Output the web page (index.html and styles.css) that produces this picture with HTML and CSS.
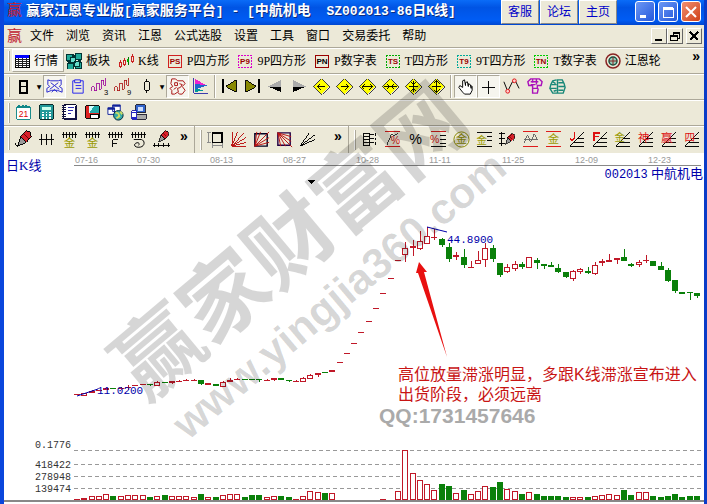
FILE: index.html
```html
<!DOCTYPE html>
<html lang="zh-CN">
<head>
    <meta charset="UTF-8">
    <meta name="viewport" content="width=device-width, initial-scale=1.0">
    <title>赢家江恩专业版</title>
    <link rel="stylesheet" href="styles.css">
</head>
<body>
    <!-- shapes used by more than one tool button -->
    <svg class="defs" aria-hidden="true">
        <symbol id="diamond" viewBox="0 0 20 20">
            <path d="M10 2l8 8-8 8-8-8z" fill="#ff0" stroke="#333"/>
        </symbol>
        <symbol id="comb" viewBox="0 0 20 20">
            <path d="M2 5h16M4 2v6M7 2v6M10 2v6M13 2v6M16 2v6" fill="none" stroke="#000"/>
        </symbol>
        <symbol id="fan" viewBox="0 0 20 20">
            <path d="M3 17L18 2M3 17h15M7 13h11M11 9h7" fill="none" stroke="#000"/>
        </symbol>
        <symbol id="pen" viewBox="0 0 20 20">
            <path d="M7 7l6-6 4 1 1 5-5 6z" fill="#d8202a" stroke="#000"/>
            <path d="M7 7l6 6-9 4z" fill="#999" stroke="#000"/>
            <path d="M10 4l5 5" stroke="#600"/>
        </symbol>
        <symbol id="steps" viewBox="0 0 20 20">
            <path d="M1 17v-5h3v5h3V8h3v7h3V4h3v6h2V1" fill="none" stroke="currentColor"/>
        </symbol>
    </svg>

    <div class="app">
        <header class="titlebar">
            <span class="logo">赢</span>
            <h1>赢家江恩专业版<span>[</span>赢家服务平台<span>] - [</span>中航机电<span>&nbsp; SZ002013-86</span>日<span>K</span>线<span>]</span></h1>
            <nav class="links">
                <a href="#service">客服</a>
                <a href="#forum">论坛</a>
                <a href="#home">主页</a>
            </nav>
            <div class="win-buttons">
                <button aria-label="最小化"><svg viewBox="0 0 18 18"><path d="M4 12h6v3H4z" fill="#fff"/></svg></button>
                <button aria-label="最大化"><svg viewBox="0 0 18 18"><path d="M4 5h10v9H4z" fill="none" stroke="#fff"/><path d="M4 5h10" stroke="#fff" stroke-width="3"/></svg></button>
                <button class="close" aria-label="关闭"><svg class="smooth" viewBox="0 0 18 18"><path d="M4 4l10 10M14 4L4 14" stroke="#fff" stroke-width="2"/></svg></button>
            </div>
        </header>

        <nav class="menu">
            <span class="logo">赢</span>
            <a href="#file">文件</a>
            <a href="#browse">浏览</a>
            <a href="#news">资讯</a>
            <a href="#gann">江恩</a>
            <a href="#formula">公式选股</a>
            <a href="#settings">设置</a>
            <a href="#tools">工具</a>
            <a href="#window">窗口</a>
            <a href="#trade">交易委托</a>
            <a href="#help">帮助</a>
            <div class="mdi">
                <button aria-label="最小化"><svg viewBox="0 0 14 14"><path d="M3 11h7" stroke="#000" stroke-width="2"/></svg></button>
                <button aria-label="还原"><svg viewBox="0 0 14 14"><path d="M5 6V3h6v6H9M2 6h7v5H2zM2 7h7M5 4h6" fill="none" stroke="#000"/></svg></button>
                <button class="mdi-close" aria-label="关闭"><svg viewBox="0 0 14 14"><path d="M3 3l8 8M11 3l-8 8" stroke="#000" stroke-width="2"/></svg></button>
            </div>
        </nav>

        <div class="toolbar text-tools">
            <i class="grip"></i>
            <button class="on"><svg viewBox="0 0 16 16"><path d="M1 2h14v12H1z" fill="#fff" stroke="#000"/><path d="M1 3h14" stroke="#00f" stroke-width="3"/><path d="M1 6h14M1 8h14M1 10h14M1 12h14M4 5v9M8 5v9M12 5v9" stroke="#222"/></svg>行情</button>
            <button><svg viewBox="0 0 16 16"><path d="M0 1h6v6H0zM9 0h6v6H9zM1 10h6v6H1zM9 9h6v6H9z" fill="#2a9" stroke="#033"/><path d="M4 4h5v5H4zM8 8h5v5H8z" fill="#6dc" stroke="#033"/><path d="M7 2l2 2M2 8l2 2M13 7l2 2" stroke="#033" stroke-width="2"/></svg>板块</button>
            <button><svg viewBox="0 0 16 16"><path d="M2 7v8M6 5v8M14 1v9" stroke="#c22"/><path d="M10 4v8" stroke="#070"/><path d="M1 9h2v4H1zM5 7h2v4H5zM13 3h2v5h-2z" fill="#ece9d8" stroke="#c22"/><path d="M9 6h2v3H9z" fill="#0a0"/></svg>K线</button>
            <button><svg viewBox="0 0 16 16"><path d="M1 2h13v12H1z" fill="none" stroke="#d02020"/><text x="8" y="11" fill="#900">PS</text></svg>P四方形</button>
            <button><svg viewBox="0 0 16 16"><path d="M1 2h13v12H1z" fill="none" stroke="#d0c" stroke-dasharray="2 1"/><text x="8" y="11" fill="#900">P9</text></svg>9P四方形</button>
            <button><svg viewBox="0 0 16 16"><path d="M1 2h13v12H1z" fill="none" stroke="#900"/><text x="8" y="11" fill="#000">PN</text></svg>P数字表</button>
            <button><svg viewBox="0 0 16 16"><path d="M1 2h13v12H1z" fill="none" stroke="#0a0" stroke-dasharray="2 1"/><text x="8" y="11" fill="#900">TS</text></svg>T四方形</button>
            <button><svg viewBox="0 0 16 16"><path d="M1 2h13v12H1z" fill="none" stroke="#0a9" stroke-dasharray="2 1"/><text x="8" y="11" fill="#900">T9</text></svg>9T四方形</button>
            <button><svg viewBox="0 0 16 16"><path d="M1 2h13v12H1z" fill="none" stroke="#0c0" stroke-dasharray="2 1"/><text x="8" y="11" fill="#900">TN</text></svg>T数字表</button>
            <button><svg class="smooth" viewBox="0 0 16 16"><circle cx="8" cy="8" r="7" fill="none" stroke="#822" stroke-width="1.5"/><circle cx="8" cy="8" r="4" fill="#9cb" stroke="#154" stroke-width="1.5"/><path d="M8 4v8M4 8h8" stroke="#822"/></svg>江恩轮</button>
            <button class="more" aria-label="更多">»</button>
        </div>

        <div class="toolbar">
            <i class="grip"></i>
            <button aria-label="日线"><svg viewBox="0 0 20 20"><path d="M6 4h8v13H6zM6 10h8" fill="none" stroke="#000" stroke-width="2"/></svg></button>
            <button class="drop" aria-label="选择周期">▼</button>
            <button class="on" aria-label="叠加"><svg class="smooth" viewBox="0 0 20 20"><path d="M3 3l3 1h8l3-1v5l-2 2 3 2v4l-5-2H7l-5 2v-4l3-2-2-2zM6 6l4 3 4-3M5 13l5-4 5 4M7 16l3-3 3 3" fill="none" stroke="#22c"/></svg></button>
            <button aria-label="记录"><svg class="smooth" viewBox="0 0 20 20"><path d="M7 4H5v13h11V4h-3M7 3h6v3H7zM8 9h6M8 12h6" fill="none" stroke="#22e"/></svg></button>
            <button aria-label="三日线"><svg viewBox="0 0 20 20" color="#909"><use href="#steps" width="17" height="17"/><text x="16" y="19" fill="#000">3</text></svg></button>
            <button aria-label="九日线"><svg viewBox="0 0 20 20" color="#a11"><use href="#steps" width="17" height="17"/><text x="16" y="19" fill="#000">9</text></svg></button>
            <button aria-label="蜡烛图"><svg viewBox="0 0 20 20"><path d="M10 2v15" stroke="#000"/><path d="M8 5h5v9H8z" fill="#ece9d8" stroke="#000"/></svg></button>
            <button class="drop" aria-label="选择图形">▼</button>
            <button class="on" aria-label="形态"><svg class="smooth" viewBox="0 0 20 20"><path d="M4 2h4l2 2h6l2 3-3 3 3 4-3 4h-3l-2-2-3 2H4v-4l-2-2 3-2-2-3zM7 6h3v3H7zM12 7l3 1-2 3-3 1 1 4M6 13l3-2" fill="none" stroke="#a11"/></svg></button>
            <button aria-label="筹码分布"><svg viewBox="0 0 20 20"><path d="M4 2v7h13z" fill="#e2c"/><path d="M4 7l13 2-13 4z" fill="#26c"/><path d="M4 12l10 2-10 2z" fill="#099"/><path d="M3 1v16h15" fill="none" stroke="#33a"/></svg></button>
            <i class="sep"></i>
            <button aria-label="第一页"><svg viewBox="0 0 20 20"><path d="M3 2v15" stroke="#000" stroke-width="2"/><path d="M17 3v13L6 10z" fill="#880" stroke="#000"/></svg></button>
            <button aria-label="最后页"><svg viewBox="0 0 20 20"><path d="M17 2v15" stroke="#000" stroke-width="2"/><path d="M3 3v13l11-6z" fill="#880" stroke="#000"/></svg></button>
            <button aria-label="向左"><svg viewBox="0 0 20 20"><path d="M2 10L16 3v7z" fill="#aaa"/><path d="M2 10h14v6z" fill="#000"/></svg></button>
            <button aria-label="向右"><svg viewBox="0 0 20 20"><path d="M18 10L4 3v7z" fill="#aaa"/><path d="M18 10H4v6z" fill="#000"/></svg></button>
            <button aria-label="左移"><svg viewBox="0 0 20 20"><use href="#diamond"/><path d="M6 10h8M9 7l-3 3 3 3" fill="none" stroke="#000"/></svg></button>
            <button aria-label="右移"><svg viewBox="0 0 20 20"><use href="#diamond"/><path d="M6 10h8M11 7l3 3-3 3" fill="none" stroke="#000"/></svg></button>
            <button aria-label="横向放大"><svg viewBox="0 0 20 20"><use href="#diamond"/><path d="M5 10h10M8 7l-3 3 3 3M12 7l3 3-3 3" fill="none" stroke="#000"/></svg></button>
            <button aria-label="横向缩小"><svg viewBox="0 0 20 20"><use href="#diamond"/><path d="M3 10h14M6 7l3 3-3 3M14 7l-3 3 3 3" fill="none" stroke="#000"/></svg></button>
            <button aria-label="缩小"><svg viewBox="0 0 20 20"><use href="#diamond"/><path d="M5 10h10M10 4v12M7 5l3 3 3-3M7 15l3-3 3 3" fill="none" stroke="#000"/></svg></button>
            <button aria-label="放大"><svg viewBox="0 0 20 20"><use href="#diamond"/><path d="M5 10h10M10 4v12M7 7l3-3 3 3M7 13l3 3 3-3" fill="none" stroke="#000"/></svg></button>
            <i class="sep"></i>
            <button class="on" aria-label="拖动"><svg class="smooth" viewBox="0 0 20 20"><path d="M7 16l-4-5 1-2 3 2V4l2-1 1 6V6l2-1 1 5V7l2 1 1 4V9l1 1v4l-2 4H9z" fill="#fff" stroke="#000"/></svg></button>
            <button class="on" aria-label="十字光标"><svg viewBox="0 0 20 20"><path d="M10 4v14M3 11h14" stroke="#000"/></svg></button>
            <button aria-label="折线"><svg class="smooth" viewBox="0 0 20 20"><path d="M2 5l4 10 5-10 3-1 4 8" fill="none" stroke="#000"/><circle cx="6" cy="15" r="2" fill="#fcc" stroke="#d11"/><circle cx="13" cy="4" r="2" fill="#fcc" stroke="#d11"/></svg></button>
            <button aria-label="江恩工具"><svg class="smooth" viewBox="0 0 20 20"><path d="M3 5l3-3h9l3 3-1 4h-4v3H8V9H4zM6 5h8M8 2v4M12 2v6M8 12v5h5l1-5M6 8h5" fill="none" stroke="#a1b" stroke-width="1.5"/></svg></button>
            <button aria-label="智能分析"><svg class="smooth" viewBox="0 0 20 20"><path d="M9 3L5 4 3 8l-1 4 3 5h5V3h5l2 4 1 4-2 6h-6M4 8h5M3 12h6M5 5l3 2M11 6h5M11 10h6M11 14h5M6 15l3-1" fill="none" stroke="#198878" stroke-width="1.5"/></svg></button>
        </div>

        <div class="toolbar">
            <i class="grip"></i>
            <button aria-label="日历"><svg viewBox="0 0 20 20"><path d="M3 4h14v13H3z" fill="#fff" stroke="#188"/><path d="M3 4h14M5 2v3M9 2v3M13 2v3" stroke="#188" stroke-width="2"/><text x="10" y="15" class="t9" fill="#d00">21</text></svg></button>
            <button aria-label="计算器"><svg viewBox="0 0 20 20"><path d="M3 2h14v15H3z" fill="#299" stroke="#022"/><path d="M5 4h10v3H5z" fill="#cfe"/><path d="M5 10h10M5 13h10M5 16h10" stroke="#fff" stroke-dasharray="2 2" stroke-width="2"/></svg></button>
            <button aria-label="笔记"><svg viewBox="0 0 20 20"><path d="M4 2h13v15H4z" fill="#fff" stroke="#002"/><path d="M4 2v15" stroke="#114" stroke-width="4" stroke-dasharray="1 1"/><path d="M8 5h7M8 8h6M8 11h4" stroke="#22a"/><path d="M17 3v14H6" fill="none" stroke="#114" stroke-width="2"/></svg></button>
            <button aria-label="保存"><svg viewBox="0 0 20 20"><path d="M3 3h14v13H3z" fill="#d22" stroke="#000"/><path d="M6 3h11v7H6z" fill="#2aa"/><path d="M6 3h6L7 10H6z" fill="#cff"/><path d="M8 12h8v4H8z" fill="#fff" stroke="#000"/></svg></button>
            <button aria-label="网络"><svg class="smooth" viewBox="0 0 20 20"><path d="M7 2h8v7H7zM2 5h7v7H2z" fill="#fff" stroke="#129"/><path d="M7 3h8M2 6h7" stroke="#129" stroke-width="2"/><circle cx="13" cy="13" r="5" fill="#3aa" stroke="#023"/><path d="M10 10l3 1 1 3-3 2M15 9l2 3" fill="none" stroke="#cd6" stroke-width="2"/></svg></button>
            <button aria-label="系统"><svg viewBox="0 0 20 20"><path d="M7 2h10v8H7z" fill="#36c" stroke="#223"/><path d="M9 4h6v4H9z" fill="#cdf"/><path d="M8 12h10v5H8z" fill="#aaa" stroke="#223"/><path d="M3 8h5v9H3z" fill="#fff" stroke="#22a"/><path d="M3 10h5M3 16h5" stroke="#22c" stroke-width="2"/></svg></button>
        </div>

        <div class="draw-bars">
            <div class="toolbar">
                <i class="grip"></i>
                <button aria-label="画笔"><svg viewBox="0 0 20 20"><use href="#pen"/><path d="M1 14l3 4" stroke="#000"/></svg></button>
                <button aria-label="等分线"><svg viewBox="0 0 20 20"><path d="M2 10h16M5 4v12M10 4v12M15 4v12" stroke="#000"/></svg></button>
                <button aria-label="黄金周期"><svg viewBox="0 0 20 20"><use href="#comb"/><text x="10" y="18" class="t12" fill="#990">金</text></svg></button>
                <button aria-label="黄金时间"><svg viewBox="0 0 20 20"><use href="#comb"/><text x="10" y="18" class="t12" fill="#990">金</text></svg></button>
                <button aria-label="斐波那契"><svg viewBox="0 0 20 20"><use href="#comb"/><path d="M7 18V10h6M7 14h5" fill="none" stroke="#000"/></svg></button>
                <button aria-label="螺旋"><svg viewBox="0 0 20 20"><use href="#comb"/><path class="smooth" d="M5 10h8c4 1 4 7-1 8-5 1-8-2-5-4 3-2 5 1 3 2" fill="none" stroke="#000"/></svg></button>
                <button aria-label="标尺画笔"><svg viewBox="0 0 20 20"><use href="#pen" width="17" height="15" x="3"/><path d="M1 16h18M3 14v4M7 14v4M12 14v4M17 14v4" stroke="#000"/></svg></button>
                <button class="more" aria-label="更多">»</button>
            </div>
            <div class="toolbar">
                <i class="grip"></i>
                <button aria-label="矩形"><svg viewBox="0 0 20 20"><path d="M7 3h10v10H7z" fill="none" stroke="#000" stroke-width="1.5"/><path d="M3 3v11M1 3h4M1 13h4M7 16h10M7 14v5M17 14v5" stroke="#888"/></svg></button>
                <button aria-label="射线"><svg viewBox="0 0 20 20"><path d="M3 17L4 2M3 17L9 2M3 17L16 3M3 17l15-9M3 17l15-4M3 17h15" stroke="#b11"/></svg></button>
                <button aria-label="江恩角度"><svg class="smooth" viewBox="0 0 20 20"><path d="M3 4h13v13H3z" fill="none" stroke="#002" stroke-width="1.5"/><path d="M3 17L5 2M3 17l6-15M3 17L18 2M3 17l15-9M3 17l15-4" stroke="#b11"/></svg></button>
                <button aria-label="反向角度"><svg class="smooth" viewBox="0 0 20 20"><path d="M3 3h13v13H3z" fill="none" stroke="#204" stroke-width="1.5"/><path d="M3 3l3 14M3 3l8 14M3 3l15 15M3 3l14 9M3 3l14 4" stroke="#b11"/></svg></button>
                <button aria-label="扇形线"><svg viewBox="0 0 20 20"><path d="M2 17L12 3M2 17L18 5M2 17l16-7M2 17l4-3" stroke="#000"/></svg></button>
                <button class="more" aria-label="更多">»</button>
            </div>
            <div class="toolbar">
                <i class="grip"></i>
                <button aria-label="价格尺"><svg viewBox="0 0 20 20"><path d="M4 3v14M10 3v14" stroke="#000"/><path d="M4 4h6M4 7h6M4 10h6M4 13h6M4 16h6M10 5h5M10 9h5M10 13h5" stroke="#000"/><path d="M16 3v14" stroke="#000" stroke-dasharray="3 2"/></svg></button>
                <button aria-label="涨跌幅"><svg viewBox="0 0 20 20"><path d="M2 2h16M2 17h16" stroke="#c11"/><path d="M4 16L9 4l3 2 4-3" fill="none" stroke="#333"/><text x="13" y="15" class="t11" fill="#c11">%</text></svg></button>
                <button aria-label="百分比"><svg viewBox="0 0 20 20"><text x="10" y="15" class="t15" fill="#000">%</text></svg></button>
                <button aria-label="百分比线"><svg viewBox="0 0 20 20"><path d="M2 2h16" stroke="#c11"/><path d="M12 6h6M12 10h6M12 14h6M2 17h16" stroke="#000"/><text x="6" y="14" class="t11" fill="#c11">%</text></svg></button>
                <button aria-label="黄金圆"><svg class="smooth" viewBox="0 0 20 20"><circle cx="10" cy="10" r="8" fill="none" stroke="#880"/><text x="10" y="14" class="t12" fill="#880">金</text></svg></button>
                <button aria-label="黄金分割"><svg viewBox="0 0 20 20"><path d="M2 3h16M13 7h5M13 11h5M2 17h16" stroke="#000"/><text x="7" y="15" class="t11" fill="#990">金</text></svg></button>
                <button aria-label="标注"><svg viewBox="0 0 20 20"><path d="M4 2v15M1 4h6M1 9h6M1 14h6" stroke="#000"/><use href="#pen" x="5" y="2" width="14" height="16"/></svg></button>
                <button aria-label="波浪"><svg viewBox="0 0 20 20"><path d="M2 2h16M2 17h16" stroke="#d11"/><path d="M3 14l4-9 3 8 4-9 3 6M3 10h14" fill="none" stroke="#666"/></svg></button>
                <button aria-label="黄金通道"><svg viewBox="0 0 20 20"><path d="M2 2h16M2 17h16" stroke="#d11"/><text x="10" y="14" class="t12" fill="#990">金</text></svg></button>
                <button aria-label="J线"><svg viewBox="0 0 20 20"><use href="#fan"/><path d="M8 2v7l-3 2-2-2" fill="none" stroke="#d11" stroke-width="1.5"/></svg></button>
                <button aria-label="F线"><svg viewBox="0 0 20 20"><use href="#fan"/><path d="M4 12V3h6M4 7h5" fill="none" stroke="#d11" stroke-width="1.5"/></svg></button>
                <button aria-label="金线"><svg viewBox="0 0 20 20"><use href="#fan"/><text x="7" y="12" class="t11" fill="#990">金</text></svg></button>
                <button aria-label="神线"><svg viewBox="0 0 20 20"><use href="#fan"/><text x="8" y="13" class="t12" fill="#d11">神</text></svg></button>
                <button aria-label="赢线"><svg viewBox="0 0 20 20"><use href="#fan"/><text x="8" y="13" class="t12" fill="#d11">赢</text></svg></button>
                <button aria-label="四线"><svg viewBox="0 0 20 20"><use href="#fan"/><text x="8" y="12" class="t11" fill="#d11">四</text></svg></button>
            </div>
        </div>

        <main>
            <svg class="chart" viewBox="4 153 700 351" role="img" aria-label="中航机电 日K线">
                <text x="6" y="170" class="name">日K线</text>
                <text x="703" y="178" class="name end"><tspan class="code">002013</tspan> 中航机电</text>
                <g id="dates" class="date"></g>
                <path d="M74 165H701" stroke="#888"/>
                <path d="M308 180h7l-3 4h-1z" fill="#000"/>

                <g class="scale">
                    <text x="71" y="448">0.1776</text>
                    <text x="71" y="468">418422</text>
                    <text x="71" y="480">278948</text>
                    <text x="71" y="492">139474</text>
                </g>
                <path d="M74 450H701M74 464H701M74 476H701M74 488H701" stroke="#999" stroke-dasharray="4 3"/>

                <g id="candles"></g>
                <g id="volumes"></g>
                <path d="M4 501H704" stroke="#888" stroke-width="2"/>

                <path class="smooth" d="M77 396L98 389M427 227L447 232" stroke="#00a"/>
                <text x="97" y="394" class="price">11.0200</text>
                <text x="447" y="243" class="price">44.8900</text>

                <path class="smooth" d="M419 262l8 10-3 0 23 85-29-84-2 0z" fill="#e81010"/>
                <text class="note"><tspan x="398" y="380">高位放量滞涨明显，多跟K线滞涨宣布进入</tspan><tspan x="398" y="400">出货阶段，必须远离</tspan></text>
                <text x="379" y="423" class="qq">QQ:1731457646</text>
            </svg>
        </main>

        <svg class="watermark" viewBox="0 0 707 504" aria-hidden="true">
            <text class="brand" transform="translate(145 403) rotate(-40)">赢家财富网</text>
            <text class="url" transform="translate(188 441) rotate(-40)">www.yingjia360.com</text>
        </svg>
    </div>

    <script src="script.js"></script>
</body>
</html>
```
FILE: styles.css
```css
* {
    margin: 0;
    padding: 0;
    box-sizing: border-box;
}

body {
    font-family: "Liberation Serif", "Noto Sans CJK SC", sans-serif;
    font-size: 12px;
    line-height: 16px;
    color: #000;
    background: #fff;
}

a {
    color: inherit;
    text-decoration: none;
}

button {
    font: inherit;
    color: inherit;
    background: none;
    border: 0;
}

svg {
    display: block;
    shape-rendering: crispEdges;
}

.smooth {
    shape-rendering: auto;
}

.defs {
    position: absolute;
    width: 0;
    height: 0;
}

.app {
    position: relative;
    min-height: 100vh;
    overflow: hidden;
    border-left: 4px solid #0a46dc;
    border-right: 3px solid #0a3cc8;
}

.logo {
    width: 15px;
    color: #c02030;
    font-size: 15px;
    line-height: 20px;
}

/* title bar */
.titlebar {
    display: flex;
    height: 25px;
    padding: 0 3px;
    background: linear-gradient(#0a6cf8, #0054e4 30%, #005cf4 80%, #0046d0);
}

.titlebar .logo {
    margin-right: 4px;
}

.titlebar h1 {
    font-size: 14px;
    line-height: 22px;
    font-weight: bold;
    color: #fff;
    text-shadow: 1px 1px #0a2c80;
    white-space: nowrap;
}

.titlebar h1 span {
    font-family: "Liberation Mono", monospace;
    font-size: 13px;
}

.links {
    display: flex;
    gap: 1px;
    margin-left: auto;
    margin-right: 18px;
}

.links a {
    width: 38px;
    height: 24px;
    padding-top: 3px;
    text-align: center;
    color: #0000c8;
    background: #ece9d8;
    border: 1px solid #fff;
    border-right-color: #888;
    border-bottom-color: #888;
}

.win-buttons {
    display: flex;
    gap: 3px;
    padding-top: 1px;
}

.win-buttons button {
    width: 20px;
    height: 21px;
    border: 1px solid #fff;
    border-radius: 3px;
    background: linear-gradient(135deg, #6c98f4, #2458dc);
}

.win-buttons .close {
    background: linear-gradient(135deg, #f09070, #d04018);
}

/* menu */
.menu {
    display: flex;
    align-items: center;
    gap: 12px;
    height: 22px;
    padding-left: 3px;
    background: #ece9d8;
    white-space: nowrap;
}

.menu .logo {
    margin-right: -4px;
}

.mdi {
    display: flex;
    margin-left: auto;
    padding-right: 2px;
}

.mdi button {
    width: 16px;
    height: 16px;
    background: #ece9d8;
    border: 1px solid #fff;
    border-right-color: #666;
    border-bottom-color: #666;
}

.mdi .mdi-close {
    margin-left: 3px;
}

/* toolbars */
.toolbar {
    display: flex;
    align-items: center;
    height: 26px;
    padding-left: 4px;
    background: #ece9d8;
    border-top: 1px solid #aca899;
    box-shadow: inset 0 1px #fff;
}

.toolbar button {
    flex: none;
    width: 23px;
    height: 23px;
    padding: 1px;
    border: 1px solid transparent;
}

.toolbar button svg {
    width: 19px;
    height: 19px;
}

.toolbar .on {
    background: #f6f5ee;
    border-color: #aca899 #fff #fff #aca899;
}

.toolbar text {
    font: 8px "Liberation Sans", "Noto Sans CJK SC", sans-serif;
    text-anchor: middle;
}

.toolbar .t9 {
    font-size: 9px;
}

.toolbar .t11 {
    font-size: 11px;
}

.toolbar .t12 {
    font-size: 12px;
}

.toolbar .t15 {
    font-size: 15px;
}

.grip {
    flex: none;
    width: 2px;
    height: 20px;
    margin-right: 2px;
    border-left: 1px solid #fff;
    border-right: 1px solid #aca899;
}

.sep {
    flex: none;
    width: 2px;
    height: 23px;
    margin: 0 2px;
    border-left: 1px solid #aca899;
    border-right: 1px solid #fff;
}

.toolbar .drop {
    width: 8px;
    padding: 0;
    font: 6px "DejaVu Sans", sans-serif;
}

.toolbar .more {
    width: 20px;
    height: 23px;
    font: bold 14px/12px "Liberation Sans", sans-serif;
    padding-bottom: 9px;
}

.text-tools text {
    font-weight: bold;
}

.toolbar.text-tools button {
    display: flex;
    align-items: center;
    gap: 4px;
    width: auto;
    height: 23px;
    padding: 0 5px 0 1px;
    white-space: nowrap;
}

.toolbar.text-tools button svg {
    width: 16px;
    height: 16px;
}

.toolbar.text-tools .on {
    border-color: #fff #aca899 #aca899 #fff;
}

.toolbar.text-tools .more {
    margin-left: auto;
    padding: 0 3px 9px;
}

.draw-bars {
    display: flex;
    background: #ece9d8;
}

.draw-bars .toolbar {
    flex: 0 0 auto;
    width: 191px;
    height: 28px;
    border-right: 1px solid #aca899;
}

.draw-bars .toolbar + .toolbar {
    width: 154px;
    padding-left: 5px;
}

.draw-bars .toolbar:last-child {
    flex: 1;
    width: auto;
    border-right: 0;
}

.draw-bars .more {
    margin-left: auto;
}

/* chart */
.chart {
    width: 100%;
    background: #fff;
}

.chart .name {
    font-size: 13px;
    fill: #00a;
}

.chart .code {
    font-family: "Liberation Mono", monospace;
    font-size: 12px;
}

.chart .end {
    text-anchor: end;
}

.chart .date {
    font-family: "Liberation Sans", sans-serif;
    font-size: 9px;
    fill: #999;
}

.chart .scale {
    font-family: "Liberation Mono", monospace;
    font-size: 10px;
    text-anchor: end;
    fill: #333;
}

.chart .price {
    font-family: "Liberation Mono", monospace;
    font-size: 11px;
    fill: #00a;
}

.chart .note {
    font-family: "Liberation Sans", "Noto Sans CJK SC", sans-serif;
    font-size: 16px;
    fill: #c81414;
}

.chart .qq {
    font-family: "Liberation Sans", sans-serif;
    font-size: 21px;
    font-weight: bold;
    fill: #aaa;
}

.watermark {
    position: absolute;
    top: 0;
    left: -4px;
    width: calc(100% + 7px);
    pointer-events: none;
    fill: rgba(0, 0, 0, 0.16);
    font-weight: bold;
}

.watermark .brand {
    font-family: "Noto Sans CJK SC", sans-serif;
    font-size: 86px;
}

.watermark .url {
    font-family: "Liberation Sans", sans-serif;
    font-size: 43px;
}
```
FILE: script.js
```js
// kind (h = hollow red, r = red, g = green), body top, body bottom, wick top, wick bottom, volume height
const bars = [
    ['r', 394, 395, 394, 395, 1], ['h', 393, 395, 393, 395, 2], ['r', 391, 393, 390, 393, 4], ['r', 390, 391, 390, 391, 4],
    ['r', 388, 390, 387, 390, 6], ['g', 388, 389, 388, 389, 4], ['r', 388, 389, 387, 390, 4], ['r', 387, 388, 385, 390, 5],
    ['r', 385, 386, 385, 386, 5], ['r', 384, 385, 384, 385, 5], ['g', 384, 385, 384, 386, 3], ['h', 382, 385, 381, 386, 4],
    ['g', 382, 383, 382, 383, 5], ['r', 381, 383, 381, 384, 4], ['r', 381, 382, 380, 382, 4], ['r', 380, 381, 379, 381, 4],
    ['r', 380, 381, 379, 381, 3], ['g', 380, 384, 380, 385, 6], ['r', 383, 385, 383, 385, 3], ['g', 384, 386, 384, 386, 3],
    ['h', 382, 386, 381, 386, 5], ['r', 380, 382, 378, 382, 6], ['r', 379, 380, 378, 380, 6], ['g', 379, 380, 379, 380, 3],
    ['g', 379, 380, 379, 380, 5], ['g', 379, 380, 379, 382, 5], ['r', 380, 381, 379, 381, 3], ['r', 378, 380, 378, 381, 4],
    ['g', 378, 380, 378, 380, 4], ['g', 380, 381, 380, 382, 3], ['r', 381, 382, 380, 382, 1], ['h', 378, 381, 377, 382, 4],
    ['h', 375, 378, 374, 379, 9], ['r', 373, 375, 373, 377, 8], ['g', 372, 373, 372, 373, 7], ['r', 370, 372, 370, 372, 7],
    ['r', 362, 363, 362, 363, 0], ['r', 353, 354, 353, 354, 0], ['r', 343, 344, 343, 344, 0], ['r', 332, 333, 332, 333, 0],
    ['r', 321, 322, 321, 322, 0], ['r', 308, 309, 308, 309, 0], ['r', 293, 294, 293, 294, 1], ['r', 278, 279, 278, 279, 0],
    ['r', 260, 261, 260, 261, 9], ['h', 248, 254, 242, 262, 50], ['r', 246, 248, 240, 256, 27], ['h', 241, 248, 231, 250, 20],
    ['h', 236, 243, 227, 244, 16], ['r', 237, 238, 229, 240, 10], ['g', 239, 245, 238, 247, 16], ['g', 247, 259, 243, 262, 14],
    ['r', 255, 257, 252, 260, 7], ['g', 257, 265, 249, 268, 10], ['r', 267, 268, 261, 268, 6], ['h', 260, 263, 251, 263, 9],
    ['h', 248, 259, 243, 267, 14], ['g', 248, 259, 245, 262, 13], ['g', 263, 275, 263, 277, 18], ['h', 267, 271, 264, 273, 11],
    ['h', 264, 268, 261, 271, 9], ['g', 264, 267, 262, 269, 6], ['h', 257, 267, 257, 268, 8], ['g', 260, 263, 258, 269, 6],
    ['g', 264, 266, 264, 269, 4], ['g', 265, 267, 262, 267, 4], ['g', 268, 272, 264, 273, 4], ['g', 272, 277, 272, 278, 3],
    ['h', 271, 278, 270, 281, 3], ['h', 269, 271, 268, 274, 3], ['g', 271, 273, 267, 274, 3], ['h', 265, 273, 262, 275, 4],
    ['r', 261, 263, 259, 266, 5], ['r', 260, 262, 254, 262, 6], ['r', 258, 260, 258, 264, 5], ['g', 257, 261, 249, 261, 10],
    ['g', 264, 266, 263, 267, 5], ['h', 262, 264, 260, 267, 8], ['r', 260, 261, 255, 263, 8], ['g', 261, 266, 261, 266, 4],
    ['g', 266, 270, 262, 270, 3], ['g', 270, 281, 268, 282, 4], ['g', 280, 291, 280, 293, 6], ['g', 292, 294, 292, 294, 3],
    ['g', 292, 293, 292, 300, 4], ['g', 293, 296, 293, 298, 4]
];
const dates = ['07-16', '07-30', '08-13', '08-27', '10-28', '11-11', '11-25', '12-09', '12-23'];
const dateX = [75, 137, 210, 283, 356, 429, 502, 575, 648];

const RED = '#c01828';
const GREEN = '#0a800a';
const BASE = 500;

function rect(x, y, w, h, fill, stroke) {
    if (stroke) {
        // keep the outline inside the box
        return `<rect x="${x + 0.5}" y="${y + 0.5}" width="${w - 1}" height="${h - 1}" fill="${fill}" stroke="${stroke}"/>`;
    }
    return `<rect x="${x}" y="${y}" width="${w}" height="${h}" fill="${fill}"/>`;
}

let candles = '';
let volumes = '';

bars.forEach(([kind, top, bottom, high, low, vol], i) => {
    const x = Math.round(77 + i * 620 / 85) - 3;
    const color = kind === 'g' ? GREEN : RED;

    // one-pixel days have no wick
    if (low - high > 1) {
        candles += rect(x + 3, high, 1, low - high, color);
    }
    candles += kind === 'h'
        ? rect(x, top, 6, bottom - top + 1, '#fff', color)
        : rect(x, top, 6, bottom - top, color);

    // green days are solid, red days are outlined
    if (vol > 1) {
        volumes += kind === 'g'
            ? rect(x, BASE - vol, 6, vol, color)
            : rect(x, BASE - vol, 6, vol, '#fff', color);
    } else if (vol) {
        volumes += rect(x, BASE - 1, 6, 1, color);
    }
});

document.getElementById('candles').innerHTML = candles;
document.getElementById('volumes').innerHTML = volumes;
document.getElementById('dates').innerHTML = dates
    .map((d, i) => `<text x="${dateX[i]}" y="163">${d}</text>`)
    .join('');
```
